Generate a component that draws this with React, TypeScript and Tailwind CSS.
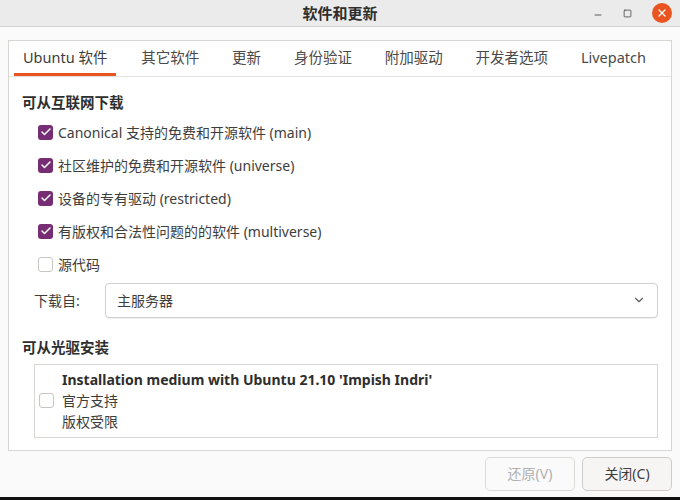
import { ChevronDown, X, Minus, Square, Check } from "lucide-react";

const tabs = ["Ubuntu 软件", "其它软件", "更新", "身份验证", "附加驱动", "开发者选项", "Livepatch"];

const sources = [
  { label: "Canonical 支持的免费和开源软件 (main)", on: true },
  { label: "社区维护的免费和开源软件 (universe)", on: true },
  { label: "设备的专有驱动 (restricted)", on: true },
  { label: "有版权和合法性问题的的软件 (multiverse)", on: true },
  { label: "源代码", on: false },
];

function Box({ on }: { on: boolean }) {
  if (on) {
    return (
      <span className="flex h-[15px] w-[15px] shrink-0 items-center justify-center rounded-[3px] bg-[#772d74]">
        <Check size={12} strokeWidth={3} className="text-white" />
      </span>
    );
  }
  return <span className="h-[15px] w-[15px] shrink-0 rounded-[3px] border border-[#c8c6c3] bg-white" />;
}

export default function App() {
  return (
    <div
      className="flex h-[500px] w-[680px] flex-col overflow-hidden bg-[#fafafa] text-[14px] text-[#3d3d3d]"
      style={{ fontFamily: '"Noto Sans", "Noto Sans CJK SC", sans-serif' }}
    >
      {/* title bar */}
      <div className="relative flex h-[27px] shrink-0 items-center justify-center border-b border-[#d6d4d1] bg-[#ebebeb]">
        <span className="text-[15px] font-bold text-[#2e2e2e]">软件和更新</span>
        <div className="absolute right-[8px] top-[3px] flex items-center gap-[20px]">
          <Minus size={10} strokeWidth={2} className="mt-[4px] text-[#3d3d3d]" />
          <Square size={9} strokeWidth={2} className="text-[#3d3d3d]" />
          <span className="flex h-[20px] w-[20px] items-center justify-center rounded-full bg-[#e95420]">
            <X size={12} strokeWidth={2.5} className="text-white" />
          </span>
        </div>
      </div>

      <div className="flex flex-1 flex-col px-[8px] pt-[13px]">
        {/* notebook */}
        <div className="flex flex-col border border-[#d8d6d3] bg-white">
          <div className="flex h-[36px] items-stretch justify-between border-b border-[#e4e2df] pl-[5px] pr-[17px]">
            {tabs.map((t, i) => (
              <div
                key={t}
                className={
                  "flex items-center whitespace-nowrap px-[8px] pt-[1px] text-[14.5px] border-b-[3px] " +
                  (i === 0 ? "border-[#e95420] px-[9px] text-[#3d3d3d]" : "border-transparent text-[#4a4a4a]")
                }
              >
                {t}
              </div>
            ))}
          </div>

          <div className="flex flex-col px-[13px] pb-[12px] pt-[15px]">
            <div className="text-[14.5px] font-bold text-[#2e2e2e]">可从互联网下载</div>
            <div className="mt-[2px] flex flex-col">
              {sources.map((s) => (
                <div key={s.label} className="flex h-[33px] items-center gap-[5px] pl-[16px]">
                  <Box on={s.on} />
                  <span>{s.label}</span>
                </div>
              ))}
            </div>

            <div className="mt-[2px] flex items-center pl-[12px]">
              <span className="w-[71px]">下载自:</span>
              <div className="flex h-[35px] flex-1 items-center justify-between rounded-[4px] border border-[#d2d0cd] bg-white pl-[11px] pr-[11px] shadow-[0_1px_1px_rgba(0,0,0,0.06)]">
                <span>主服务器</span>
                <ChevronDown size={14} strokeWidth={2} className="text-[#5e5e5e]" />
              </div>
            </div>

            <div className="mt-[19px] text-[14.5px] font-bold text-[#2e2e2e]">可从光驱安装</div>
            <div className="mt-[5px] ml-[12px] flex h-[74px] items-center gap-[8px] border border-[#d8d6d3] pl-[4px]">
              <Box on={false} />
              <div className="flex flex-col leading-[21px]">
                <span className="font-bold text-[#2e2e2e]">Installation medium with Ubuntu 21.10 'Impish Indri'</span>
                <span>官方支持</span>
                <span>版权受限</span>
              </div>
            </div>
          </div>
        </div>

        {/* dialog buttons */}
        <div className="mt-[6px] flex justify-end gap-[7px]">
          <button className="h-[34px] w-[90px] rounded-[5px] border border-[#dcdad7] bg-[#fafafa] text-[#b0b0b0]">
            还原(V)
          </button>
          <button className="h-[34px] w-[90px] rounded-[5px] border border-[#cfcdca] bg-[#f6f5f4] text-[#3d3d3d]">
            关闭(C)
          </button>
        </div>
      </div>

      <div className="h-[3px] shrink-0 bg-[#111]" />
    </div>
  );
}
